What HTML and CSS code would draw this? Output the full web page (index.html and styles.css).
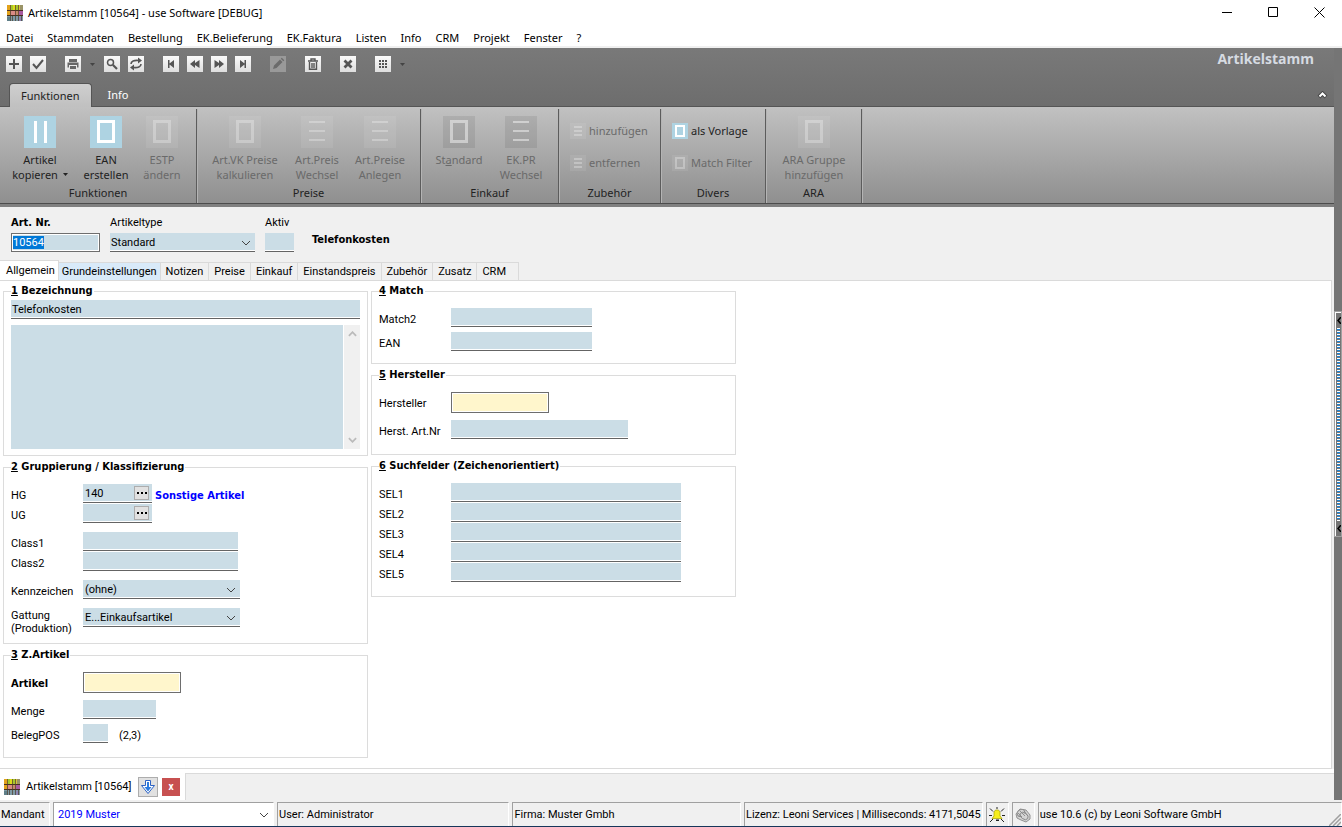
FILE: index.html
```html
<!DOCTYPE html>
<html lang="de">
<head>
<meta charset="utf-8">
<title>Artikelstamm [10564] - use Software [DEBUG]</title>
<link rel="stylesheet" href="styles.css">
</head>
<body>
<svg class="sprite" aria-hidden="true">
  <symbol id="app" viewBox="0 0 16 16">
    <path fill="#d9c23a" d="M0 0h16v5H0z"/><path fill="#c58a6a" d="M0 5h16v6H0z"/><path fill="#7f9aa6" d="M0 11h16v5H0z"/>
    <path fill="#e2a21c" d="M0 0h3v11H0z"/><path fill="#a5c82c" d="M4 0h2v5H4zM9 0h2v5H9z"/><path fill="#dcdc1c" d="M6 0h2v5H6z"/><path fill="#9a9468" d="M13 0h3v5h-3z"/>
    <path fill="#d98a86" d="M4 6h4v4H4z"/><path fill="#a85aa0" d="M12 6h4v4h-4z"/><path fill="#5f7f88" d="M0 12h3v4H0z"/><path fill="#8c86b4" d="M12 12h3v4h-3z"/>
    <path stroke="#4a2f22" d="M0 5.500h16M0 10.500h16"/><path stroke="#4a3a2a" stroke-opacity=".7" d="M3.500 0v16M8.500 0v16M11.500 0v16M5.500 11v5M14.500 11v5"/>
  </symbol>
  <symbol id="chev" viewBox="0 0 10 6"><path d="M1 1l4 4 4-4" fill="none" stroke="#444"/></symbol>
  <symbol id="drop" viewBox="0 0 5 3"><path d="M0 0h5L2.500 3z" fill="currentColor"/></symbol>
  <symbol id="dots" viewBox="0 0 10 2"><path d="M0 0h2v2H0zM4 0h2v2H4zM8 0h2v2H8z"/></symbol>
  <symbol id="r-copy" viewBox="0 0 32 32"><path stroke="#fff" stroke-width="3" d="M11.500 5v22M21.500 5v22"/></symbol>
  <symbol id="r-box" viewBox="0 0 32 32"><path fill="none" stroke="#fff" stroke-width="3" d="M8.500 5.500h15v20h-15z"/></symbol>
  <symbol id="r-list" viewBox="0 0 32 32"><path stroke="#fff" stroke-width="2" d="M8 6h16M8 15h16M8 24h16"/></symbol>
  <symbol id="s-box" viewBox="0 0 16 16"><path fill="none" stroke="#fff" stroke-width="2" d="M4 3h8v10H4z"/></symbol>
  <symbol id="s-list" viewBox="0 0 16 16"><path stroke="#fff" stroke-width="2" d="M4 4h8M4 8h8M4 12h8"/></symbol>
</svg>

<header class="titlebar">
  <svg class="i16"><use href="#app"/></svg>
  <h1>Artikelstamm [10564] - use Software [DEBUG]</h1>
  <div class="winbtns">
    <button aria-label="Minimieren"><svg class="i11" viewBox="0 0 11 11"><path stroke="#000" d="M0 5.500h10"/></svg></button>
    <button aria-label="Maximieren"><svg class="i11" viewBox="0 0 11 11"><path fill="none" stroke="#000" d="M.5.5h9v9h-9z"/></svg></button>
    <button aria-label="Schließen"><svg class="i11" viewBox="0 0 11 11"><path stroke="#000" d="M.5.5l10 10M10.500.5l-10 10"/></svg></button>
  </div>
</header>
<nav class="menubar">
  <button>Datei</button><button>Stammdaten</button><button>Bestellung</button><button>EK.Belieferung</button><button>EK.Faktura</button><button>Listen</button><button>Info</button><button>CRM</button><button>Projekt</button><button>Fenster</button><button>?</button>
</nav>

<div class="workspace">
<main class="client">
  <section class="ribbon">
    <div class="ribbon-top">
      <div class="quick">
        <div class="qgroup">
          <button aria-label="Neu"><svg viewBox="0 0 16 16"><path stroke="#555" stroke-width="2" d="M8 3v10M3 8h10"/></svg></button>
          <button aria-label="Speichern"><svg viewBox="0 0 16 16"><path fill="none" stroke="#555" stroke-width="2" d="M3 8l3.500 4L13 4"/></svg></button>
        </div>
        <div class="qgroup">
          <button aria-label="Drucken"><svg viewBox="0 0 16 16"><path fill="#666" d="M4 3h8v3H4zM2.500 6.500h11v5H12V9H4v2.500H2.500zM5 10h6v3H5z"/></svg></button>
          <span class="qdrop"><svg><use href="#drop"/></svg></span>
          <button aria-label="Suchen"><svg viewBox="0 0 16 16"><circle cx="6.500" cy="6.500" r="3" fill="none" stroke="#555" stroke-width="1.500"/><path stroke="#555" stroke-width="2.200" d="M9 9l4 4"/></svg></button>
          <button aria-label="Aktualisieren"><svg viewBox="0 0 16 16"><path fill="none" stroke="#555" stroke-width="1.600" d="M3 8c0-3 3-4 8-3.500M13 8c0 3-3 4-8 3.500"/><path fill="#555" d="M10 1.500l4 3-4 3zM6 8.500l-4 3 4 3z"/></svg></button>
        </div>
        <div class="qgroup">
          <button aria-label="Erster"><svg viewBox="0 0 16 16"><path fill="#555" d="M5 4h1.500v3.500L11 4v8L6.500 8.500V12H5z"/></svg></button>
          <button aria-label="Zurück"><svg viewBox="0 0 16 16"><path fill="#555" d="M3 8l5-4v3l4.500-3v8L8 9v3z"/></svg></button>
          <button aria-label="Vor"><svg viewBox="0 0 16 16"><path fill="#555" d="M13 8L8 4v3L3.500 4v8L8 9v3z"/></svg></button>
          <button aria-label="Letzter"><svg viewBox="0 0 16 16"><path fill="#555" d="M11 4H9.500v3.500L5 4v8l4.500-3.500V12H11z"/></svg></button>
        </div>
        <div class="qgroup">
          <button class="off" disabled aria-label="Bearbeiten"><svg viewBox="0 0 16 16"><path fill="#6b6b6b" d="M3 13l1-3.500L10 3.500l2.500 2.500-6 6zM10.800 2.700l1-1 2.500 2.500-1 1z"/></svg></button>
        </div>
        <div class="qgroup">
          <button aria-label="Löschen"><svg viewBox="0 0 16 16"><path fill="none" stroke="#555" stroke-width="1.400" d="M3 5h10M6 4.500V3h4v1.500M4.500 6v7.300h7V6M7 7v5M9 7v5"/></svg></button>
        </div>
        <div class="qgroup">
          <button aria-label="Abbrechen"><svg viewBox="0 0 16 16"><path stroke="#555" stroke-width="2.800" d="M4.500 4.500l7 7M11.500 4.500l-7 7"/></svg></button>
        </div>
        <div class="qgroup">
          <button aria-label="Raster"><svg viewBox="0 0 16 16"><path fill="#555" d="M4 4h2v2H4zM7 4h2v2H7zM10 4h2v2h-2zM4 7h2v2H4zM7 7h2v2H7zM10 7h2v2h-2zM4 10h2v2H4zM7 10h2v2H7zM10 10h2v2h-2z"/></svg></button>
          <span class="qdrop"><svg><use href="#drop"/></svg></span>
        </div>
      </div>
      <h2>Artikelstamm</h2>
    </div>
    <div class="ribbon-tabs">
      <button class="on">Funktionen</button><button>Info</button>
      <button class="collapse" aria-label="Menüband reduzieren"><svg viewBox="0 0 10 8"><path d="M1.500 6L5 2.500 8.500 6" fill="none" stroke="#444" stroke-width="4"/><path d="M2 5.500l3-3 3 3" fill="none" stroke="#fff" stroke-width="2"/></svg></button>
    </div>
    <div class="ribbon-body">
      <div class="rgroup g-funk">
        <div class="rbtns">
          <button class="big w66"><svg><use href="#r-copy"/></svg><span>Artikel<br>kopieren <svg class="arr"><use href="#drop"/></svg></span></button>
          <button class="big w66"><svg><use href="#r-box"/></svg><span>EAN<br>erstellen</span></button>
          <button class="big w46" disabled><svg><use href="#r-box"/></svg><span>ESTP<br>ändern</span></button>
        </div>
        <h3>Funktionen</h3>
      </div>
      <div class="rgroup g-preise">
        <div class="rbtns">
          <button class="big w96" disabled><svg><use href="#r-box"/></svg><span>Art.VK Preise<br>kalkulieren</span></button>
          <button class="big w48" disabled><svg><use href="#r-list"/></svg><span>Art.Preis<br>Wechsel</span></button>
          <button class="big w78" disabled><svg><use href="#r-list"/></svg><span>Art.Preise<br>Anlegen</span></button>
        </div>
        <h3>Preise</h3>
      </div>
      <div class="rgroup g-einkauf">
        <div class="rbtns">
          <button class="big dark w76" disabled><svg><use href="#r-box"/></svg><span>St<u>a</u>ndard</span></button>
          <button class="big dark w48" disabled><svg><use href="#r-list"/></svg><span>EK.PR<br>Wechsel</span></button>
        </div>
        <h3>Einkauf</h3>
      </div>
      <div class="rgroup g-zub">
        <div class="rlist">
          <button class="small" disabled><svg><use href="#s-list"/></svg>hinzufügen</button>
          <button class="small" disabled><svg><use href="#s-list"/></svg>entfernen</button>
        </div>
        <h3>Zubehör</h3>
      </div>
      <div class="rgroup g-div">
        <div class="rlist">
          <button class="small"><svg><use href="#s-box"/></svg>als Vorlage</button>
          <button class="small" disabled><svg><use href="#s-box"/></svg>Match Filter</button>
        </div>
        <h3>Divers</h3>
      </div>
      <div class="rgroup g-ara">
        <div class="rbtns">
          <button class="big w96" disabled><svg><use href="#r-box"/></svg><span>ARA Gruppe<br>hinzufügen</span></button>
        </div>
        <h3>ARA</h3>
      </div>
    </div>
  </section>

  <form class="record">
    <div class="head">
      <div class="hf h-nr"><label for="artnr"><b>Art. Nr.</b></label><input id="artnr" class="boxed blue" value="10564"></div>
      <div class="hf h-type"><label for="arttype">Artikeltype</label><div class="sel"><select id="arttype"><option>Standard</option></select><svg><use href="#chev"/></svg></div></div>
      <div class="hf h-aktiv"><label for="aktiv">Aktiv</label><input id="aktiv" class="line"></div>
      <strong class="h-name">Telefonkosten</strong>
    </div>
    <div class="tabs" role="tablist">
      <button type="button" role="tab" class="on">Allgemein</button><button type="button" role="tab" class="hot">Grundeinstellungen</button><button type="button" role="tab">Notizen</button><button type="button" role="tab">Preise</button><button type="button" role="tab">Einkauf</button><button type="button" role="tab">Einstandspreis</button><button type="button" role="tab">Zubehör</button><button type="button" role="tab">Zusatz</button><button type="button" role="tab" class="last">CRM</button>
    </div>
    <div class="panel">
      <div class="col">
        <fieldset class="f-bez">
          <legend><u>1</u> Bezeichnung</legend>
          <input class="line" aria-label="Bezeichnung" value="Telefonkosten">
          <div class="memo"><textarea aria-label="Langtext"></textarea><div class="scroll"><svg viewBox="0 0 10 6"><path d="M1 5l4-4 4 4" fill="none" stroke="#bbb" stroke-width="2"/></svg><svg viewBox="0 0 10 6"><path d="M1 1l4 4 4-4" fill="none" stroke="#bbb" stroke-width="2"/></svg></div></div>
        </fieldset>
        <fieldset class="f-grp">
          <legend><u>2</u> Gruppierung / Klassifizierung</legend>
          <div class="row"><label for="hg">HG</label><div class="pick"><input id="hg" class="line" value="140"><button type="button" aria-label="HG wählen"><svg><use href="#dots"/></svg></button></div><b class="info">Sonstige Artikel</b></div>
          <div class="row"><label for="ug">UG</label><div class="pick"><input id="ug" class="line"><button type="button" aria-label="UG wählen"><svg><use href="#dots"/></svg></button></div></div>
          <div class="row gap"><label for="c1">Class1</label><input id="c1" class="line w155"></div>
          <div class="row"><label for="c2">Class2</label><input id="c2" class="line w155"></div>
          <div class="row gap"><label for="kz">Kennzeichen</label><div class="sel w157"><select id="kz"><option>(ohne)</option></select><svg><use href="#chev"/></svg></div></div>
          <div class="row gap two"><label for="gt">Gattung<br>(Produktion)</label><div class="sel w157"><select id="gt"><option>E...Einkaufsartikel</option></select><svg><use href="#chev"/></svg></div></div>
        </fieldset>
        <fieldset class="f-z">
          <legend><u>3</u> Z.Artikel</legend>
          <div class="row"><label for="za"><b>Artikel</b></label><input id="za" class="boxed yellow"></div>
          <div class="row r24 gap"><label for="mg">Menge</label><input id="mg" class="line w73"></div>
          <div class="row r24"><label for="bp">BelegPOS</label><input id="bp" class="line w25"><span class="note">(2,3)</span></div>
        </fieldset>
      </div>
      <div class="col">
        <fieldset class="f-match">
          <legend><u>4</u> Match</legend>
          <div class="row r24"><label for="m2">Match2</label><input id="m2" class="line w141"></div>
          <div class="row r24"><label for="ean">EAN</label><input id="ean" class="line w141"></div>
        </fieldset>
        <fieldset class="f-her">
          <legend><u>5</u> Hersteller</legend>
          <div class="row"><label for="he">Hersteller</label><input id="he" class="boxed yellow"></div>
          <div class="row gap"><label for="ha">Herst. Art.Nr</label><input id="ha" class="line w177"></div>
        </fieldset>
        <fieldset class="f-sel">
          <legend><u>6</u> Suchfelder (Zeichenorientiert)</legend>
          <div class="row"><label for="s1">SEL1</label><input id="s1" class="line w230"></div>
          <div class="row"><label for="s2">SEL2</label><input id="s2" class="line w230"></div>
          <div class="row"><label for="s3">SEL3</label><input id="s3" class="line w230"></div>
          <div class="row"><label for="s4">SEL4</label><input id="s4" class="line w230"></div>
          <div class="row"><label for="s5">SEL5</label><input id="s5" class="line w230"></div>
        </fieldset>
      </div>
    </div>
  </form>

  <div class="docbar">
    <div class="doctab">
      <svg class="i16"><use href="#app"/></svg><span>Artikelstamm [10564]</span>
      <button class="dl" aria-label="Ablegen"><svg viewBox="0 0 16 16"><path fill="#fff" stroke="#2c62c4" d="M5.500 1.500h5v5h4L8 14.500 1.500 6.500h4z"/><path fill="#2c7be0" d="M7 3h2v5h2.500L8 12.500 4.500 8H7z"/></svg></button>
      <button class="cl" aria-label="Tab schließen">x</button>
    </div>
    <div class="docrest"></div>
  </div>
</main>
<aside class="splitter"><button class="handle" aria-label="Seitenleiste öffnen"><svg viewBox="0 0 4 7"><path d="M4 0L1 3.500 4 7" fill="none" stroke="#000" stroke-width="1.500"/></svg><span class="dots"></span><svg viewBox="0 0 4 7"><path d="M4 0L1 3.500 4 7" fill="none" stroke="#000" stroke-width="1.500"/></svg></button></aside>
</div>

<footer class="status">
  <label class="cell s1" for="mandant">Mandant</label>
  <div class="cell s2"><select id="mandant"><option>2019 Muster</option></select><svg><use href="#chev"/></svg></div>
  <div class="cell s3">User: Administrator</div>
  <div class="cell s4">Firma: Muster Gmbh</div>
  <div class="cell s5">Lizenz: Leoni Services | Milliseconds: 4171,5045</div>
  <div class="cell s6"><svg class="i16" viewBox="0 0 16 16"><path stroke="#222" d="M1 1.500l3 3M15 1.500l-3 3M0 8.500h3M13 8.500h3M1 15l3-3M15 15l-3-3M8 0v2"/><path fill="#f6ee1c" stroke="#a8a000" stroke-width=".7" d="M6.500 3h3l1.500 2v4l2 2.500H3L5 9V5z"/><path fill="#222" d="M7 12.500h3V14H7z"/></svg></div>
  <div class="cell s6"><svg class="i16" viewBox="0 0 16 16"><g fill="#d4d4d4" stroke="#888" stroke-width=".9"><path d="M1 7l4-5 6 1 4 5v4l-4 3-5-2-4-2z"/><ellipse cx="6" cy="6" rx="4" ry="3.200" transform="rotate(-30 6 6)"/><ellipse cx="9" cy="9" rx="4.500" ry="3" transform="rotate(35 9 9)"/><path d="M3 6l4 4M5 4l5 5M9 4l4 5"/></g></svg></div>
  <div class="cell s7"><span>use 10.6 (c) by Leoni Software GmbH</span><svg class="grip" viewBox="0 0 12 12"><path stroke="#a0a0a0" stroke-width="1.500" d="M0 12L12 0M4 12l8-8M8 12l4-4"/></svg></div>
</footer>
<script src="script.js"></script>
</body>
</html>
```
FILE: styles.css
```css
* { box-sizing: border-box; }
body {
  margin: 0; height: 100vh; display: flex; flex-direction: column; background: #fff;
  font: 11px/13px Roboto, "Liberation Sans", sans-serif; color: #000; overflow: hidden;
}
button, input, select, textarea { font: inherit; color: inherit; margin: 0; padding: 0; border: 0; border-radius: 0; background: none; outline: none; }
h1, h2, h3 { margin: 0; font-size: inherit; font-weight: normal; }
svg { display: block; flex: none; }
b, strong, legend { font-family: "DejaVu Sans Condensed", "DejaVu Sans", sans-serif; font-weight: bold; }
.sprite { position: absolute; width: 0; height: 0; }
.i16 { width: 16px; height: 16px; }
.i11 { width: 11px; height: 11px; }

.titlebar, .menubar, .ribbon { font-family: "Noto Sans", "Open Sans", sans-serif; }
.titlebar { display: flex; align-items: center; height: 25px; padding-left: 7px; gap: 5px; }
.winbtns { margin-left: auto; display: flex; }
.winbtns button { width: 46px; height: 25px; display: flex; align-items: center; justify-content: center; }
.menubar { display: flex; gap: 14px; height: 23px; padding: 0 6px; border-bottom: 2px solid #f0f0f0; }
.menubar button { height: 24px; }

.workspace { flex: 1; display: flex; min-height: 0; }
.client { flex: 1; display: flex; flex-direction: column; min-width: 0; }

.ribbon { background: linear-gradient(#797979, #6d6d6d 59px, #757575); border-bottom: 3px solid #808080; }
.ribbon-top { display: flex; justify-content: space-between; height: 35px; padding: 8px 20px 0 6px; }
.ribbon-top h2 { font: bold 14px/18px "Open Sans", "Noto Sans", sans-serif; color: #d6dbe2; margin-top: -6px; }
.quick { display: flex; gap: 19px; height: 16px; }
.qgroup { display: flex; gap: 8px; align-items: center; }
.quick button { width: 16px; height: 16px; background: linear-gradient(#fafafa, #dedede); }
.quick button svg { width: 16px; height: 16px; }
.quick button.off { background: #999; }
.qdrop { width: 7px; color: #444; }
.qdrop svg { width: 5px; height: 3px; margin-left: 1px; }
.ribbon-tabs { display: flex; align-items: stretch; height: 24px; padding-left: 9px; border-bottom: 1px solid #555; }
.ribbon-tabs button { padding: 0 11px; color: #fff; }
.ribbon-tabs .on { color: #222; background: linear-gradient(#cfcfcf, #c0c0c0); border: 1px solid #555; border-bottom: 0; border-radius: 4px 4px 0 0; margin-bottom: -1px; padding: 0 12px 0 11px; margin-right: 4px; }
.ribbon-tabs .collapse { margin-left: auto; padding: 0 6px; display: flex; align-items: center; }
.collapse svg { width: 11px; height: 8px; }
.ribbon-body { display: flex; background: linear-gradient(#c1c1c1, #8f8f8f); border-bottom: 1px solid #4c4c4c; height: 97px; padding-top: 2px; }
.rgroup { border-right: 1px solid #5c5c5c; box-shadow: 1px 0 #b4b4b4; display: flex; flex-direction: column; justify-content: space-between; padding: 7px 0 3px; color: #222; }
.rgroup h3 { text-align: center; line-height: 15px; }
.g-funk { width: 197px; } .g-preise { width: 224px; } .g-einkauf { width: 138px; } .g-zub { width: 102px; } .g-div { width: 105px; } .g-ara { width: 96px; }
.rbtns { display: flex; align-items: flex-start; }
.g-funk .rbtns { padding-left: 7px; }
.big { display: flex; flex-direction: column; align-items: center; gap: 4px; flex: none; line-height: 15px; white-space: nowrap; }
.big > svg { width: 32px; height: 32px; background: #aed3e2; }
.big .arr { display: inline-block; width: 5px; height: 3px; vertical-align: 3px; margin-left: 2px; }
.big:disabled, .small:disabled { color: #6a6a6a; }
.big:disabled > svg, .small:disabled > svg { background: rgba(255, 255, 255, .08); }
.big:disabled use, .small:disabled use { opacity: .28; }
.big.dark:disabled > svg { background: rgba(0, 0, 0, .08); }
.big.dark:disabled use { opacity: .45; }
.w46 { width: 46px; } .w48 { width: 48px; } .w66 { width: 66px; } .w76 { width: 76px; } .w78 { width: 78px; } .w96 { width: 96px; }
.rlist { display: flex; flex-direction: column; align-items: flex-start; gap: 16px; padding: 7px 0 0 11px; }
.small { display: flex; align-items: center; gap: 3px; height: 16px; line-height: 14px; padding-bottom: 1px; white-space: nowrap; }
.small svg { width: 16px; height: 16px; background: #aed3e2; }

.record { flex: 1; display: flex; flex-direction: column; background: #f0f0f0; min-height: 0; }
.head { display: flex; gap: 10px; padding: 9px 11px 0; height: 53px; }
.hf { display: flex; flex-direction: column; gap: 4px; }
.hf input { width: 100%; }
.h-nr { width: 89px; } .h-type { width: 145px; } .h-aktiv { width: 29px; }
.h-name { margin: 17px 0 0 8px; }
.line, .sel select {
  height: 19px; padding: 0 0 0 1px; border-bottom: 1px solid #646464;
  background: linear-gradient(#cbdde6, #cbdde6) top / 100% calc(100% - 1px) no-repeat #fff;
}
.boxed { height: 21px; width: 98px; border: 1px solid #6e6e6e; padding: 2px; background-clip: content-box; }
.boxed.yellow { background: #fff6cc; box-shadow: inset 0 0 0 1px #fff; }
.boxed.blue { height: 19px; padding: 1px; background: #cbdde6; box-shadow: inset 0 0 0 1px #fff; }
.sel { position: relative; }
.sel select, .s2 select { appearance: none; width: 100%; display: block; }
.sel svg, .s2 svg { position: absolute; right: 4px; top: 7px; width: 10px; height: 6px; pointer-events: none; }
::selection { background: #0078d7; color: #fff; }

.tabs { display: flex; align-items: flex-end; height: 21px; margin-bottom: -1px; }
.tabs button { height: 19px; padding: 0 5px; border: 1px solid #dadada; border-left: 0; white-space: nowrap; }
.tabs .on { height: 21px; padding: 0 3px 1px 6px; background: #fff; border-bottom-color: #fff; }
.tabs .hot { background: #d9eaf9; padding: 0 3px; }
.tabs .last { padding: 0 12px 0 5px; }
.panel { flex: 1; display: flex; gap: 3px; align-items: flex-start; background: #fff; border: 1px solid #dadada; border-left: 0; margin-right: 2px; padding: 4px 3px 0; min-height: 0; }
.col { display: flex; flex-direction: column; gap: 5px; width: 365px; }
fieldset { margin: 0; min-width: 0; border: 1px solid #dcdcdc; padding: 11px 7px 0; }
legend { padding: 0 1px 0 0; line-height: 12px; }
.f-bez { padding: 3px 7px 6px; }
.f-bez > .line { width: 100%; display: block; }
.memo { display: flex; gap: 1px; margin-top: 6px; height: 124px; }
.memo textarea { flex: 1; resize: none; background: #cbdde6; }
.scroll { width: 16px; background: #f0f0f0; display: flex; flex-direction: column; justify-content: space-between; align-items: center; padding: 6px 0; }
.scroll svg { width: 9px; height: 6px; }
.row { display: grid; grid-template-columns: 72px auto 1fr; justify-items: start; min-height: 20px; align-items: start; }
.row label { padding-top: 5px; }
.row.r24 { min-height: 24px; }
.row.gap { margin-top: 8px; }
.f-z .row.gap, .f-her .row.gap { margin-top: 7px; }
.row.two { min-height: 27px; }
.row.two label { padding-top: 1px; }
.f-grp { padding-bottom: 8px; }
.f-z { padding-bottom: 9px; }
.f-match { padding-bottom: 7px; }
.f-her { padding-bottom: 14px; }
.f-sel { padding-bottom: 13px; }
.w155 { width: 155px; } .w157 { width: 157px; } .w73 { width: 73px; } .w25 { width: 25px; } .w141 { width: 141px; } .w177 { width: 177px; } .w230 { width: 230px; }
.row .sel select { padding-left: 2px; }
.pick { position: relative; width: 69px; }
.pick input { width: 100%; padding-left: 2px; display: block; }
.pick button { position: absolute; right: 3px; top: 2px; width: 15px; height: 14px; border: 1px solid #adadad; background: #e1e1e1; display: flex; align-items: center; justify-content: center; }
.pick button svg { width: 10px; height: 2px; }
.info { color: #00f; padding: 5px 0 0 3px; }
.note { padding: 5px 0 0 11px; }

.docbar { display: flex; background: #fff; padding-top: 4px; height: 31px; }
.doctab { display: flex; align-items: center; width: 186px; padding: 0 5px 0 4px; border-right: 1px solid #dadada; }
.doctab span { margin-left: 6px; flex: 1; white-space: nowrap; }
.docrest { flex: 1; background: #f0f0f0; border-top: 1px solid #dadada; }
.dl { width: 20px; height: 20px; background: #e1e1e1; border: 1px solid #adadad; display: flex; align-items: center; justify-content: center; margin-right: 4px; }
.dl svg { width: 16px; height: 16px; }
.cl { width: 18px; height: 18px; background: #c75050; color: #fff; font-weight: bold; font-size: 10px; line-height: 12px; }

.splitter { width: 8px; background: #757575; display: flex; align-items: center; }
.handle { width: 8px; height: 226px; border: 1px solid #a0a0a0; box-shadow: inset 1px 1px #fff; background: #757575; display: flex; flex-direction: column; align-items: center; justify-content: space-between; padding: 5px 0 4px 1px; }
.handle svg { width: 4px; height: 7px; }
.dots { flex: 1; width: 3px; margin: 4px 0; background: repeating-linear-gradient(#fff 0 1px, #1883d7 1px 2px, #757575 2px 3px); }

.status { display: flex; gap: 3px; height: 27px; padding-top: 2px; background: #f0f0f0; border-bottom: 1px solid #17365a; }
.cell { border-top: 1px solid #a0a0a0; border-left: 1px solid #a0a0a0; border-right: 1px solid #fff; padding: 0 1px; display: flex; align-items: center; white-space: nowrap; overflow: hidden; }
.s1 { width: 50px; border-left: 0; }
.s2 { width: 221px; background: #fff; position: relative; padding-left: 4px; }
.s2 select { color: #00f; }
.s2 svg { top: 9px; }
.s3 { flex: 232; } .s4 { flex: 228; } .s5 { flex: none; }
.s6 { width: 23px; justify-content: center; }
.s7 { flex: 306; justify-content: space-between; padding-right: 0; }
.grip { width: 12px; height: 12px; align-self: flex-end; }
```
FILE: script.js
```js
const number = document.getElementById("artnr");
number.focus();
number.select();
```
